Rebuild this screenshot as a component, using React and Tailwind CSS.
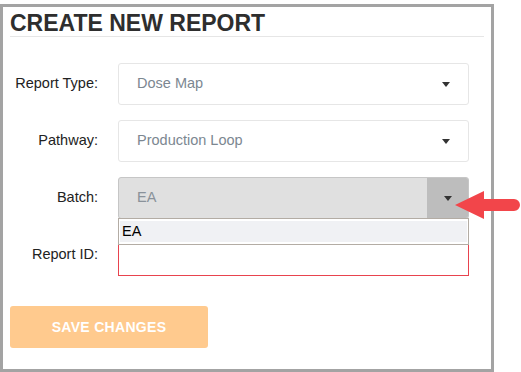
import React from "react";

const Caret = () => (
  <svg width="8" height="5" viewBox="0 0 8 5" className="block">
    <path d="M0 0h8L4 5z" fill="#333" />
  </svg>
);

function Row({ label, children }) {
  return (
    <div className="flex items-center">
      <div className="w-[95px] shrink-0 text-right text-[14.5px] text-[#222]">{label}</div>
      <div className="ml-[20px] w-[351px]">{children}</div>
    </div>
  );
}

function Select({ value }) {
  return (
    <div className="flex h-[42px] items-center justify-between rounded-[3px] border border-[#e6e6e6] bg-white pl-[18px] pr-[18px]">
      <span className="text-[14.5px] text-[#7c8791]">{value}</span>
      <Caret />
    </div>
  );
}

export default function App() {
  return (
    <div className="relative h-[372px] w-[521px] bg-white" style={{ fontFamily: '"Liberation Sans", Arial, sans-serif' }}>
      <div className="mt-[4px] h-[368px] w-[494px] border-[3px] border-[#a3a3a3] bg-white">
        <div className="px-[7px]">
          <h1 className="pt-[3px] text-[23px] font-bold leading-[26px] text-[#2e2e2e]">CREATE NEW REPORT</h1>
          <div className="h-px bg-[#e6e6e6]" />
        </div>

        <div className="mt-[26px] flex flex-col gap-[15px]">
          <Row label="Report Type:">
            <Select value="Dose Map" />
          </Row>
          <Row label="Pathway:">
            <Select value="Production Loop" />
          </Row>
          <Row label="Batch:">
            <div className="flex h-[42px] items-stretch overflow-hidden rounded-[3px] border border-[#c6c6c6] bg-[#e0e0e0]">
              <div className="flex flex-1 items-center pl-[18px] text-[14.5px] text-[#8a929a]">EA</div>
              <div className="flex w-[41px] items-center justify-center bg-[#bdbdbd]">
                <Caret />
              </div>
            </div>
          </Row>
          <div className="relative">
            <Row label="Report ID:">
              <div className="h-[42px] border border-[#e8434e] bg-white" />
            </Row>
            <div className="absolute left-[115px] top-[-16px] w-[351px] border border-[#b3aca4] bg-white px-[1px] py-[2px]">
              <div className="bg-[#f0f1f4] pl-[2px] text-[14.5px] leading-[21px] text-black">EA</div>
            </div>
          </div>
        </div>

        <button className="ml-[7px] mt-[30px] h-[42px] w-[198px] rounded-[3px] bg-[#ffca8e] text-[14px] font-bold tracking-[0.3px] text-white">
          SAVE CHANGES
        </button>
      </div>

      <svg className="absolute left-[453px] top-[184px]" width="68" height="34" viewBox="0 0 68 34">
        <path d="M2 17 L31 3 L31 11 L61 11 A6 6 0 0 1 61 23 L31 23 L31 31 Z" fill="#f2454a" />
      </svg>
    </div>
  );
}
